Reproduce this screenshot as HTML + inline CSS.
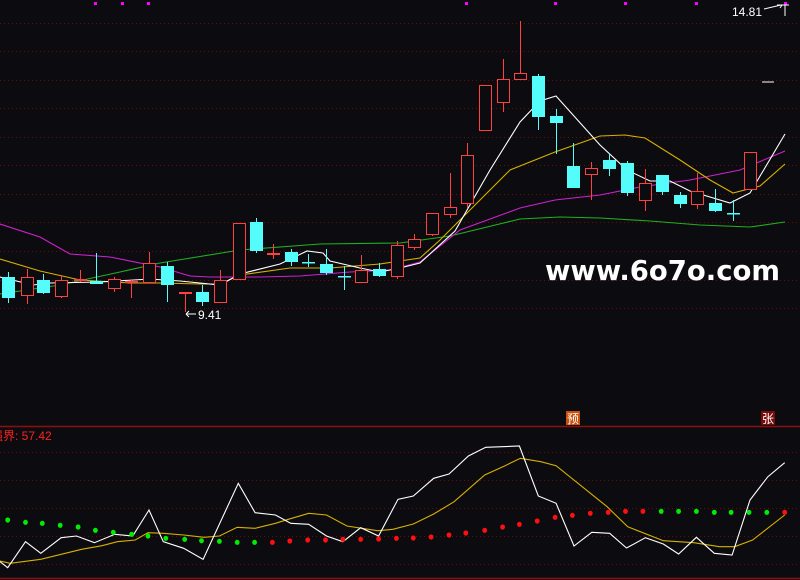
<!DOCTYPE html>
<html><head><meta charset="utf-8"><style>
html,body{margin:0;padding:0;background:#0c0c10;width:800px;height:580px;overflow:hidden}
svg{display:block}
</style></head><body>
<svg id="s" width="800" height="580" xmlns="http://www.w3.org/2000/svg" font-family="Liberation Sans, sans-serif">
<rect width="800" height="580" fill="#0c0c10"/>
<g id="grid" stroke="#6a0c0c" stroke-width="1" stroke-dasharray="1,3" shape-rendering="crispEdges"></g>
<line x1="0" y1="426.5" x2="800" y2="426.5" stroke="#8a1010" stroke-width="1.5"/>
<line x1="0" y1="578.5" x2="800" y2="578.5" stroke="#8a1010" stroke-width="1.5"/>
<g id="ma" fill="none" stroke-width="1.1"></g>
<g id="c" shape-rendering="crispEdges"></g>
<g id="bot" fill="none" stroke-width="1.1"></g>
<g id="dots"></g>
<g fill="#ff00ff"><rect x="94" y="2" width="3" height="3"/><rect x="121" y="2" width="3" height="3"/><rect x="147" y="2" width="3" height="3"/><rect x="465" y="2" width="3" height="3"/><rect x="554" y="2" width="3" height="3"/><rect x="624" y="2" width="3" height="3"/><rect x="695" y="2" width="3" height="3"/><rect x="784" y="2" width="3" height="3"/></g>
<text x="732" y="16" fill="#fff" font-size="12">14.81</text>
<path d="M764 9 L781 5 M777 5 L782 5 L780 8 M781 5 L789 5 M785 5 L785 16" stroke="#fff" fill="none" stroke-width="1"/>
<line x1="762" y1="82" x2="774" y2="82" stroke="#fff"/>
<path d="M186 314 L196 314 M186 314 L189 311 M186 314 L189 317" stroke="#fff" fill="none"/>
<text x="198" y="319" fill="#fff" font-size="12">9.41</text>
<text x="545" y="280" fill="#fff" font-size="28" font-weight="bold" font-family="DejaVu Sans, sans-serif" textLength="235" lengthAdjust="spacingAndGlyphs">www.6o7o.com</text>
<rect x="566" y="411" width="14" height="14" fill="#c8500a"/>
<text x="567" y="423" fill="#fff" font-size="12" font-family="Noto Sans CJK SC, sans-serif">预</text>
<rect x="761" y="411" width="14" height="14" fill="#7a0a0a"/>
<text x="762" y="423" fill="#fff" font-size="12" font-family="Noto Sans CJK SC, sans-serif">张</text>
<text x="-9" y="440" fill="#ff2020" font-size="12" font-family="Liberation Sans, Noto Sans CJK SC, sans-serif">强界: 57.42</text>
</svg>
<script>
var NS="http://www.w3.org/2000/svg";
function el(p,t,a){var e=document.createElementNS(NS,t);for(var k in a)e.setAttribute(k,a[k]);document.getElementById(p).appendChild(e);return e;}
[23,51,80,108,137,165,194,222,251,280,308,452,480,508,536,564].forEach(function(y){el("grid","line",{x1:0,y1:y+.5,x2:800,y2:y+.5});});
function pl(p,pts,col){el(p,"polyline",{points:pts.map(function(q){return q.join(",")}).join(" "),stroke:col});}
pl("ma",[[0,294],[60,285],[120,272],[160,263],[240,250],[320,244],[400,243],[450,236],[520,219],[560,217],[600,218],[650,221],[700,225],[750,227],[785,222]],"#20b020");
pl("ma",[[0,224],[40,237],[70,254],[110,257],[160,267],[190,276],[210,277],[260,277],[300,276],[350,272],[390,270],[420,262],[460,230],[520,208],[555,200],[600,195],[640,187],[690,180],[740,170],[785,151]],"#d020d0");
pl("ma",[[0,259],[40,271],[80,280],[130,283],[160,283],[200,284],[220,284],[240,275],[290,268],[330,268],[380,264],[420,258],[440,240],[480,200],[510,170],[555,152],[600,136],[625,135],[645,138],[680,160],[710,180],[733,193],[760,186],[785,164]],"#d8b000");
pl("ma",[[0,277],[33,285],[50,283],[100,282],[150,279],[180,281],[220,285],[240,274],[280,264],[307,251],[323,253],[330,261],[360,268],[380,272],[400,268],[420,263],[455,231],[490,170],[520,122],[540,101],[556,96],[600,145],[627,170],[650,181],[670,181],[690,191],[730,203],[750,193],[785,134]],"#ffffff");
var C=[[8,'c',277,298,272,303],[27,'r',277,296,269,304],[43,'c',280,293,274,294],[61,'r',280,297,275,298],[80,'r',279,281,270,282],[96,'c',281,284,253,284],[114,'r',279,289,277,292],[131,'r',281,283,280,298],[149,'r',263,283,252,283],[167,'c',266,285,262,302],[185,'r',292,294,292,312],[202,'c',292,302,285,306],[220,'r',280,303,270,303],[239,'r',223,280,223,280],[256,'c',222,251,218,253],[273,'r',253,255,244,259],[291,'c',252,262,249,266],[308,'c',262,263,254,267],[326,'c',264,273,249,275],[344,'c',276,277,266,290],[361,'r',270,283,255,283],[379,'c',269,276,263,277],[397,'r',245,277,241,279],[414,'r',239,248,234,250],[432,'r',213,235,213,236],[450,'r',207,215,173,218],[467,'r',155,204,143,208],[485,'r',85,131,85,131],[503,'r',79,103,59,112],[520,'r',73,80,21,80],[538,'c',76,117,74,130],[556,'c',116,123,109,154],[573,'c',166,188,143,188],[591,'r',168,175,162,200],[609,'c',160,169,154,176],[627,'c',163,193,161,196],[645,'r',183,201,169,211],[662,'c',175,192,175,195],[680,'c',195,204,192,208],[697,'r',191,205,173,209],[715,'c',203,211,189,212],[733,'c',213,214,200,221],[750,'r',152,190,152,190]];
C.forEach(function(k){var x=k[0],col=k[1]=='r'?'#ff4040':'#54fcfc';
var h=Math.max(k[3]-k[2],1.5);
if(k[1]=='r'){
 el("c","rect",{x:x,y:k[4],width:1,height:k[5]-k[4],fill:col});
 if(h<3) el("c","rect",{x:x-6,y:k[2],width:13,height:2,fill:col});
 else {el("c","rect",{x:x-6,y:k[2],width:13,height:h,fill:col});el("c","rect",{x:x-5,y:k[2]+1,width:11,height:h-2,fill:"#0c0c10"});}
} else {
 el("c","rect",{x:x,y:k[4],width:1,height:k[5]-k[4],fill:col});
 el("c","rect",{x:x-6,y:k[2],width:13,height:h,fill:col});}
});
function cv(a){return a.map(function(q){return [+(q[0]/1.96).toFixed(1),+(q[1]/3+400).toFixed(1)];});}
pl("bot",cv([[0,483],[20,490],[80,478],[160,448],[200,437],[230,425],[265,420],[290,398],[320,400],[360,405],[400,412],[430,408],[465,382],[500,385],[540,370],[565,358],[605,340],[640,345],[680,378],[740,392],[770,388],[810,372],[850,342],[890,305],[950,225],[990,197],[1020,175],[1060,185],[1090,197],[1190,320],[1230,380],[1300,422],[1360,428],[1410,440],[1440,440],[1475,420],[1538,345]]),"#d8b000");
pl("bot",cv([[0,485],[15,503],[50,425],[80,460],[120,413],[150,408],[185,428],[225,403],[260,408],[292,330],[320,425],[360,445],[398,478],[467,250],[500,338],[540,345],[570,370],[605,373],[640,408],[672,425],[707,383],[742,408],[780,298],[810,288],[850,235],[880,222],[918,168],[952,142],[1018,138],[1055,288],[1090,310],[1125,438],[1160,397],[1195,400],[1228,444],[1265,413],[1300,432],[1330,462],[1365,412],[1400,460],[1435,465],[1470,300],[1505,230],[1538,188]]),"#ffffff");
var D=[[15,360,'g'],[50,367,'g'],[83,370,'g'],[118,376,'g'],[153,381,'g'],[187,391,'g'],[222,397,'g'],[258,403,'g'],[290,408,'g'],[325,415,'g'],[362,418,'g'],[395,422,'g'],[430,424,'g'],[465,427,'g'],[499,427,'g'],[534,427,'r'],[568,423,'r'],[603,420,'r'],[638,420,'r'],[672,418,'r'],[707,418,'r'],[742,417,'r'],[777,415,'r'],[810,414,'r'],[845,411,'r'],[880,405,'r'],[913,399,'r'],[950,391,'r'],[985,381,'r'],[1018,373,'r'],[1053,363,'r'],[1088,352,'r'],[1122,346,'r'],[1157,340,'r'],[1192,337,'r'],[1226,334,'r'],[1260,334,'r'],[1296,334,'g'],[1330,334,'g'],[1365,334,'g'],[1400,337,'g'],[1433,337,'g'],[1468,337,'g'],[1503,337,'g'],[1538,337,'r']];
D.forEach(function(d){el("dots","ellipse",{cx:(d[0]/1.96).toFixed(1),cy:(d[1]/3+400).toFixed(1),rx:2.4,ry:2.6,fill:d[2]=='g'?'#00ee00':'#ff1010'});});
</script>
</body></html>
